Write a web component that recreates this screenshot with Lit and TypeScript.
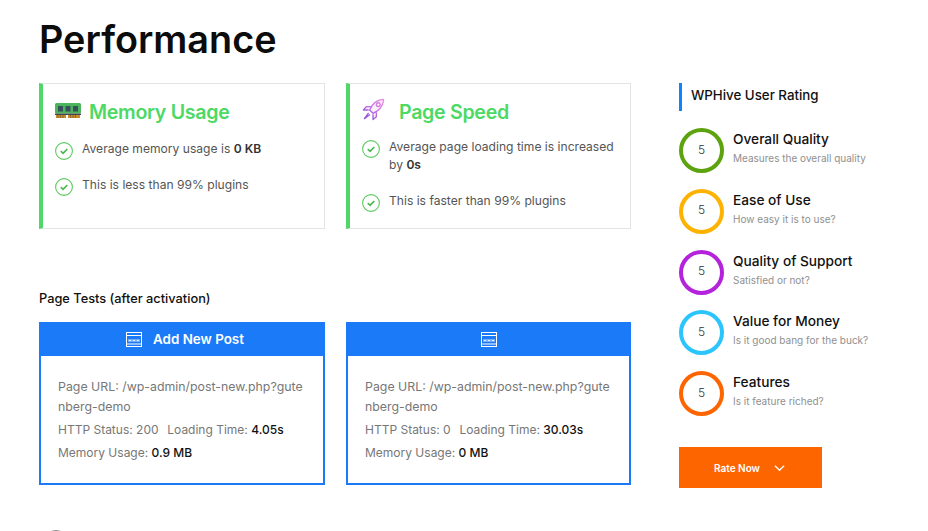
import { LitElement, html, css } from "lit";
import { customElement } from "lit/decorators.js";

const check = html`<svg class="check" viewBox="0 0 18 18" aria-hidden="true">
  <circle cx="9" cy="9" r="8.4" fill="none" stroke="#5cc95f" stroke-width="1.1"/>
  <path d="M5.8 9.2l2.3 2.2 4.2-4.4" fill="none" stroke="#4cb84f" stroke-width="1.7"/>
</svg>`;

const ram = html`<svg class="ico" viewBox="0 0 26 15" aria-hidden="true">
  <rect x="0" y="0" width="26" height="10.500" rx="1.5" fill="#4cb45a"/>
  <rect x="3" y="3" width="5" height="5.500" fill="#37505a"/>
  <rect x="10.500" y="3" width="5" height="5.500" fill="#37505a"/>
  <rect x="18" y="3" width="5" height="5.500" fill="#37505a"/>
  <rect x="0" y="10.500" width="26" height="1.500" fill="#3c4a4e"/>
  <rect x="1" y="12" width="10" height="3" fill="#c98a2c"/>
  <rect x="13" y="12" width="12" height="3" fill="#c98a2c"/>
  <path d="M3 12v3M5.500 12v3M8 12v3M15.500 12v3M18 12v3M20.500 12v3" stroke="#7a5a24" stroke-width=".7"/>
</svg>`;

const rocket = html`<svg class="rocket" viewBox="0 0 24 24" fill="none" stroke-width="1.400" aria-hidden="true">
  <defs><linearGradient id="rk" x1="0" y1="1" x2="1" y2="0">
    <stop offset="0" stop-color="#8a4fd8"/><stop offset="1" stop-color="#f08ae8"/></linearGradient></defs>
  <path fill="#f3d9f7" fill-opacity=".45" stroke="url(#rk)" stroke-linejoin="round" stroke-linecap="round" d="M22.500 1.500c-5 .3-9 2.500-12 6.500l-2.500 4.500 3.500 3.500 4.500-2.500c4-3 6.200-7 6.500-12zM8.500 9H4.500L1.500 12.500h5M15 15.500v4l-3.500 3v-5M6.500 16l-4 5.500 5.500-4M17 5a2 2 0 1 0 .01 0z"/>
</svg>`;

const win = html`<svg class="win" viewBox="0 0 16 15" fill="none" stroke="#fff" aria-hidden="true">
  <rect x=".5" y=".5" width="15" height="14" stroke-width="1"/>
  <path d="M.5 3.500h15M.5 12h15" stroke-width="1"/>
  <path d="M3 7v3M5 7v3M7 7v3M9 7v3M11 7v3M13 7v3M3 8.500h2M7 8.500h2M11 8.500h2" stroke-width=".8"/>
</svg>`;

const ratings = [
  ["Overall Quality", "Measures the overall quality", "#5da30f"],
  ["Ease of Use", "How easy it is to use?", "#fdb201"],
  ["Quality of Support", "Satisfied or not?", "#b522dc"],
  ["Value for Money", "Is it good bang for the buck?", "#2cc4fd"],
  ["Features", "Is it feature riched?", "#fd6500"],
];

@customElement("app-root")
export class AppRoot extends LitElement {
  static styles = css`
    :host {
      display: block;
      width: 928px;
      height: 531px;
      overflow: hidden;
      background: #fff;
      font-family: Inter, "Noto Sans", sans-serif;
      color: #555;
      box-sizing: border-box;
      padding: 0 0 0 39px;
    }
    h1 {
      margin: 0;
      padding-top: 14px;
      height: 83px;
      box-sizing: border-box;
      font-size: 37.800px;
      line-height: 50px;
      font-weight: 600;
      color: #0c0c0c;
    }
    .cols { display: flex; gap: 48px; }
    .main { width: 592px; }
    .pair { display: grid; grid-template-columns: 286px 285px; gap: 21px; }
    .card {
      height: 146px;
      box-sizing: border-box;
      border: 1px solid #e4e4e4;
      border-left: 4px solid #4fd868;
      padding: 14px 10px 0 12px;
    }
    .head { display: flex; align-items: center; height: 28px; margin-bottom: 14px; }
    .tight .head { margin-bottom: 12px; }
    .ico { width: 26px; height: 15px; margin: -3px 8px 0 0; }
    .rocket { width: 23px; height: 23px; margin: -5px 14px 0 0; }
    .head span { font-size: 19.600px; font-weight: 600; color: #4cd964; letter-spacing: -.3px; }
    .row { display: flex; gap: 9px; font-size: 12.100px; line-height: 18px; margin-bottom: 18px; color: #555; }
    .row b { font-weight: 600; color: #333; }
    .check { width: 18px; height: 18px; flex: none; margin: 2px 0 -2px; }
    .tests-title { margin: 61px 0 14px; font-size: 12.800px; line-height: 18px; font-weight: 500; color: #111; }
    .test { height: 163px; box-sizing: border-box; border: 2px solid #1a7af8; }
    .bar {
      height: 32px;
      box-sizing: border-box;
      padding-bottom: 3px;
      background: #1a7af8;
      display: flex;
      align-items: center;
      justify-content: center;
      gap: 11px;
      color: #fff;
      font-size: 13.400px;
      font-weight: 600;
    }
    .bar span { margin-right: -6px; }
    .win { width: 16px; height: 15px; margin-top: 2px; }
    .body { padding: 21px 17px 0; font-size: 12px; line-height: 23px; color: #777; }
    .url { font-size: 12.350px; line-height: 20px; word-break: break-all; margin-bottom: 1px; }
    .load { margin-left: 2px; }
    .body b { font-weight: 500; color: #111; }
    .side { width: 200px; }
    .side h2 {
      margin: 0 0 17px;
      height: 28px;
      box-sizing: border-box;
      border-left: 3px solid #0a84ff;
      padding-left: 9px;
      font-size: 13.300px;
      line-height: 24px;
      font-weight: 500;
      color: #111;
    }
    .rate { display: flex; gap: 9px; height: 45px; margin-bottom: 15.750px; }
    .ring {
      width: 45px;
      height: 45px;
      box-sizing: border-box;
      border: 4px solid;
      border-radius: 50%;
      padding-bottom: 3px;
      flex: none;
      display: flex;
      align-items: center;
      justify-content: center;
      font-size: 12px;
      font-weight: 300;
      color: #333;
    }
    .txt { padding-top: 1px; }
    .rate strong { display: block; font-size: 13.700px; line-height: 20px; font-weight: 500; color: #111; }
    .rate small { display: block; font-size: 10px; line-height: 18px; color: #8f8f8f; }
    .btn {
      margin-top: 31px;
      width: 143px;
      height: 41px;
      background: #fd6500;
      display: flex;
      align-items: center;
      justify-content: center;
      gap: 14px;
      color: #fff;
      font-size: 10px;
      font-weight: 600;
    }
    .btn svg { width: 11px; height: 8px; margin-right: 2px; }
    .arc {
      width: 22px;
      height: 22px;
      border: 1px solid #888;
      border-radius: 50%;
      margin: 45px 0 0 5px;
    }
  `;

  test(title: string, status: string, time: string, mem: string) {
    return html`<div class="test">
      <div class="bar">${win}${title ? html`<span>${title}</span>` : ""}</div>
      <div class="body">
        <div class="url">Page URL: /wp-admin/post-new.php?gutenberg-demo</div>
        <div>HTTP Status: ${status} &nbsp;<span class="load">Loading Time: <b>${time}</b></span></div>
        <div>Memory Usage: <b>${mem}</b></div>
      </div>
    </div>`;
  }

  render() {
    return html`
      <h1>Performance</h1>
      <div class="cols">
        <div class="main">
          <div class="pair">
            <div class="card">
              <div class="head">${ram}<span>Memory Usage</span></div>
              <div class="row">${check}<div>Average memory usage is <b>0 KB</b></div></div>
              <div class="row">${check}<div>This is less than 99% plugins</div></div>
            </div>
            <div class="card tight">
              <div class="head">${rocket}<span>Page Speed</span></div>
              <div class="row">${check}<div>Average page loading time is increased by <b>0s</b></div></div>
              <div class="row">${check}<div>This is faster than 99% plugins</div></div>
            </div>
          </div>
          <div class="tests-title">Page Tests (after activation)</div>
          <div class="pair">
            ${this.test("Add New Post", "200", "4.05s", "0.9 MB")}
            ${this.test("", "0", "30.03s", "0 MB")}
          </div>
          <div class="arc"></div>
        </div>
        <div class="side">
          <h2>WPHive User Rating</h2>
          ${ratings.map(
            ([t, d, c]) => html`<div class="rate">
              <div class="ring" style="border-color:${c}">5</div>
              <div class="txt"><strong>${t}</strong><small>${d}</small></div>
            </div>`
          )}
          <div class="btn">
            <span>Rate Now</span>
            <svg viewBox="0 0 12 8" fill="none" stroke="#fff" stroke-width="1.500"><path d="M1 1.500l5 5 5-5"/></svg>
          </div>
        </div>
      </div>
    `;
  }
}
